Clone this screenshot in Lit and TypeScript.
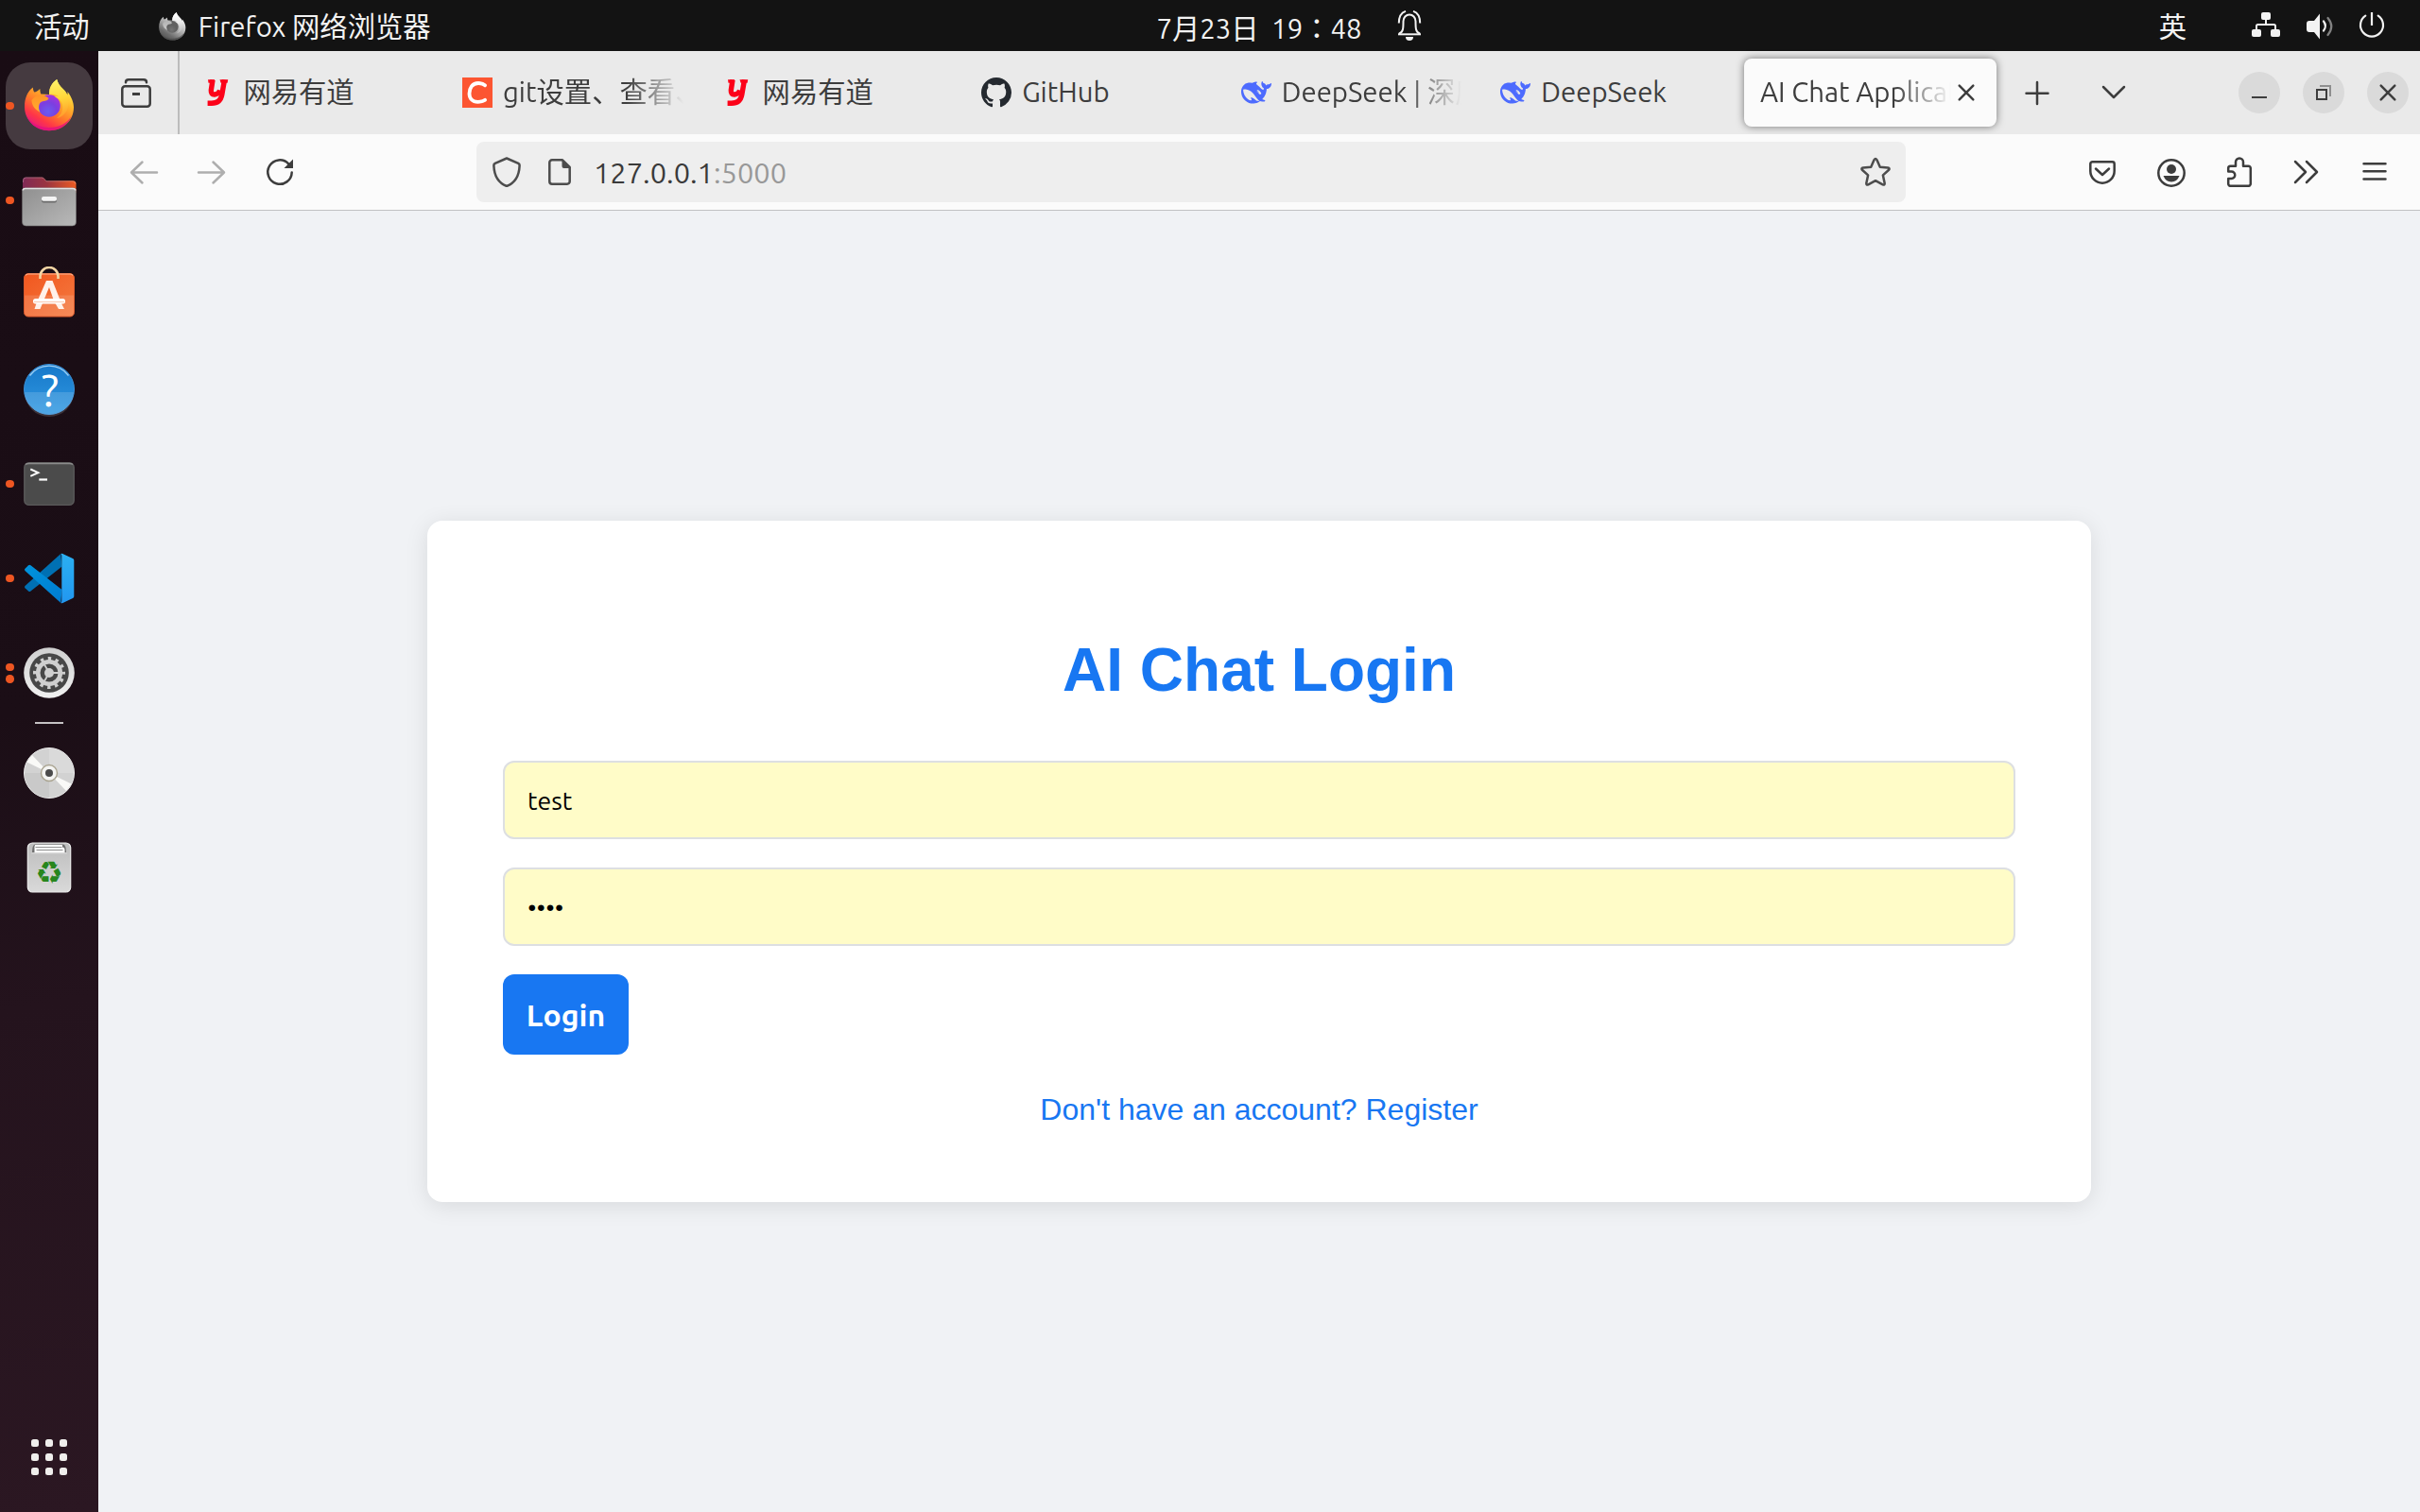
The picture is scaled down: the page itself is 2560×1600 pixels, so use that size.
import { LitElement, html, svg, css, nothing, TemplateResult } from "lit";
import { customElement, property } from "lit/decorators.js";

const DEEPSEEK =
  "M23.748 4.482c-.254-.124-.364.113-.512.234-.051.039-.094.09-.137.136-.372.397-.806.657-1.373.626-.829-.046-1.537.214-2.163.848-.133-.782-.575-1.248-1.247-1.548-.352-.156-.708-.311-.955-.65-.172-.241-.219-.51-.305-.774-.055-.16-.11-.323-.293-.35-.2-.031-.278.136-.356.276-.313.572-.434 1.202-.422 1.84.027 1.436.633 2.58 1.838 3.393.137.093.172.187.129.323-.082.28-.18.552-.266.833-.055.179-.137.217-.329.14a5.526 5.526 0 01-1.736-1.18c-.857-.828-1.631-1.742-2.597-2.458a11.365 11.365 0 00-.689-.471c-.985-.957.13-1.743.388-1.836.27-.098.093-.432-.779-.428-.872.004-1.67.295-2.687.684a3.055 3.055 0 01-.465.137 9.597 9.597 0 00-2.883-.102c-1.885.21-3.39 1.102-4.497 2.623C.082 8.606-.231 10.684.152 12.85c.403 2.284 1.569 4.175 3.36 5.653 1.858 1.533 3.997 2.284 6.438 2.14 1.482-.085 3.133-.284 4.994-1.86.47.234.962.327 1.78.397.63.059 1.236-.03 1.705-.128.735-.156.684-.837.419-.961-2.155-1.004-1.682-.595-2.113-.926 1.096-1.296 2.746-2.642 3.392-7.003.05-.347.007-.565 0-.845-.004-.17.035-.237.23-.256a4.173 4.173 0 001.545-.475c1.396-.763 1.96-2.015 2.093-3.517.02-.23-.004-.467-.247-.588zM11.581 18c-2.089-1.642-3.102-2.183-3.52-2.16-.392.024-.321.471-.235.763.09.288.207.486.371.739.114.167.192.416-.113.603-.673.416-1.842-.14-1.897-.167-1.361-.802-2.5-1.86-3.301-3.307-.774-1.393-1.224-2.887-1.298-4.482-.02-.386.093-.522.477-.592a4.696 4.696 0 011.529-.039c2.132.312 3.946 1.265 5.468 2.774.868.86 1.525 1.887 2.202 2.891.72 1.066 1.494 2.082 2.48 2.914.348.292.625.514.891.677-.802.09-2.14.11-3.054-.614zm1-6.44a.306.306 0 01.415-.287.302.302 0 01.2.288.306.306 0 01-.31.307.303.303 0 01-.304-.308zm3.11 1.596c-.2.081-.399.151-.59.16a1.245 1.245 0 01-.798-.254c-.274-.23-.47-.358-.552-.758a1.73 1.73 0 01.016-.588c.07-.327-.008-.537-.239-.727-.187-.156-.426-.199-.688-.199a.559.559 0 01-.254-.078c-.11-.054-.2-.19-.114-.358.028-.054.16-.186.192-.21.356-.202.767-.136 1.146.016.352.144.618.408 1.001.782.391.451.462.576.685.914.176.265.336.537.445.848.067.195-.019.354-.25.452z";

const GITHUB =
  "M8 0C3.58 0 0 3.58 0 8c0 3.54 2.29 6.53 5.47 7.59.4.07.55-.17.55-.38 0-.19-.01-.82-.01-1.49-2.01.37-2.53-.49-2.69-.94-.09-.23-.48-.94-.82-1.13-.28-.15-.68-.52-.01-.53.63-.01 1.08.58 1.23.82.72 1.21 1.87.87 2.33.66.07-.52.28-.87.51-1.07-1.78-.2-3.64-.89-3.64-3.95 0-.87.31-1.59.82-2.15-.08-.2-.36-1.02.08-2.12 0 0 .67-.21 2.2.82.64-.18 1.32-.27 2-.27.68 0 1.36.09 2 .27 1.53-1.04 2.2-.82 2.2-.82.44 1.1.16 1.92.08 2.12.51.56.82 1.27.82 2.15 0 3.07-1.87 3.75-3.65 3.95.29.25.54.73.54 1.48 0 1.07-.01 1.93-.01 2.2 0 .21.15.46.55.38A8.013 8.013 0 0016 8c0-4.42-3.58-8-8-8z";

type Glyph = { box: string; body: TemplateResult };

/* Line icons: stroked with the current colour. */
const LINE: Record<string, Glyph> = {
  view: {
    box: "0 0 32 32",
    body: svg`<path d="M5 5.200C5 3 6.400 2.300 8 2.300h16c1.600 0 3 .7 3 2.900"/><rect x="1.300" y="9.300" width="29.400" height="21.400" rx="3"/><path d="M12 17.500h8" stroke-width="3" stroke-linecap="butt"/>`,
  },
  back: { box: "0 0 32 32", body: svg`<path d="M30 16.500H3M14.500 5.500L3 16.500l11.500 11"/>` },
  forward: { box: "0 0 32 32", body: svg`<path d="M2 16.500h27M17.500 5.500L29 16.500l-11.500 11"/>` },
  reload: {
    box: "0 0 32 32",
    body: svg`<path d="M28.700 16.500A12.700 12.700 0 1 1 25.200 7.300"/><path d="M30 2.500V12h-9.500z" fill="currentColor" stroke="none"/>`,
  },
  shield: {
    box: "0 0 32 32",
    body: svg`<path d="M16 1.500L28.300 6.800Q29.800 7.600 29.600 9.500C29.200 19 25 27.500 16 31 7 27.500 2.800 19 2.400 9.500 2.200 7.600 3.700 6.800 3.700 6.800z"/>`,
  },
  page: {
    box: "0 0 32 32",
    body: svg`<path d="M19 3.300H8a2.700 2.700 0 0 0-2.700 2.700v20A2.700 2.700 0 0 0 8 28.700h16a2.700 2.700 0 0 0 2.700-2.700V11z"/><path d="M18.500 2.500L28 12h-7.500a2 2 0 0 1-2-2z" fill="currentColor" stroke="none"/>`,
  },
  star: {
    box: "0 0 32 32",
    body: svg`<path d="M14.600 3.100q1.400-2 2.800 0l3.400 7.600 8.300.8q2.300.5 1 2.300l-6.200 5.600 1.800 8.500q0 2.200-2 1.500L16 25.200l-7.700 4.200q-2 .7-2-1.500l1.800-8.500-6.200-5.600q-1.300-1.800 1-2.300l8.300-.8z"/>`,
  },
  pocket: {
    box: "0 0 32 32",
    body: svg`<path d="M5.500 5.200h21a2.200 2.200 0 0 1 2.200 2.200V15a12.700 12.700 0 0 1-25.400 0V7.400a2.200 2.200 0 0 1 2.200-2.200z"/><path d="M9 12.500l7 6.500 7-6.500"/>`,
  },
  account: {
    box: "0 0 32 32",
    body: svg`<circle cx="17" cy="17" r="13.700"/><circle cx="17" cy="13" r="5" fill="currentColor" stroke="none"/><path d="M8.500 20h17q-2.500 6.500-8.500 6.500T8.500 20z" fill="currentColor" stroke="none"/>`,
  },
  extension: {
    box: "0 0 32 32",
    body: svg`<path d="M5.200 15.500V12a2.300 2.300 0 0 1 2.300-2.300H13V5.500a4 4 0 0 1 8 0v4.200h5.500A2.300 2.300 0 0 1 28.800 12v16.500a2.300 2.300 0 0 1-2.300 2.300h-19a2.300 2.300 0 0 1-2.300-2.300V23H8.500a3.750 3.750 0 0 0 0-7.500z"/>`,
  },
  more: { box: "0 0 32 32", body: svg`<path d="M4 5l11 11L4 27M16 5l11 11-11 11"/>` },
  menu: { box: "0 0 32 32", body: svg`<path d="M4.500 7.200h23M4.500 15.300h23M4.500 23.400h23"/>` },
  plus: { box: "0 0 32 32", body: svg`<path d="M16 5v23M4.500 16.800h23"/>` },
  chevron: { box: "0 0 32 32", body: svg`<path d="M5 10l11 11L27 10"/>` },
  close: { box: "0 0 32 32", body: svg`<path d="M8.700 8.700l14.600 14.600M23.300 8.700L8.700 23.300"/>` },
  minimize: { box: "0 0 32 32", body: svg`<path d="M8 21h16" stroke-width="2" stroke-linecap="butt"/>` },
  restore: {
    box: "0 0 32 32",
    body: svg`<rect x="9" y="13" width="10" height="10" stroke-width="2" stroke-linejoin="miter"/><path d="M12 9h11v11" stroke-width="2" stroke="#8e8e8e" stroke-linejoin="miter" stroke-linecap="butt"/>`,
  },
  bell: {
    box: "0 0 32 32",
    body: svg`<path d="M5.500 24.300C9.500 23 9.500 18.500 9.500 11.500a6.500 7 0 0 1 13 0C22.500 18.500 22.500 23 26.500 24.300" stroke-width="2"/><path d="M4 25.300h24" stroke-width="2" stroke-linecap="butt"/><path d="M12 28h8a4 4 0 0 1-8 0z" fill="currentColor" stroke="none"/><path d="M4.800 13.500C4.800 7 7 2.500 12 .9M27.200 13.500C27.200 7 25 2.500 20 .9" stroke-width="2" stroke-linecap="butt"/>`,
  },
  network: {
    box: "0 0 32 32",
    body: svg`<g fill="currentColor" stroke="none"><rect x="11" y="2" width="10" height="8" rx="2"/><rect x="1" y="20" width="10" height="8" rx="2"/><rect x="21" y="20" width="10" height="8" rx="2"/></g><path d="M16 9v6M6 21v-4.500a1.500 1.500 0 0 1 1.500-1.500h17a1.500 1.500 0 0 1 1.500 1.500V21" stroke-width="2"/>`,
  },
  volume: {
    box: "0 0 32 32",
    body: svg`<path d="M5 11h5l6-7.500v27L10 23H5q-3 0-3-3v-6q0-3 3-3z" fill="currentColor" stroke="none"/><path d="M20 11.500q3.800 5 0 10" stroke-width="2.200"/><path d="M24.500 8q7.500 9 0 18" stroke-width="2.200" opacity=".5"/>`,
  },
  power: {
    box: "0 0 32 32",
    body: svg`<path d="M9.300 5.600a12 12 0 1 0 13.400 0" stroke-width="2.200"/><path d="M16 2v14" stroke-width="2.200" stroke-linecap="butt"/>`,
  },
};

/* Tab favicons. */
const FAVICON: Record<string, Glyph> = {
  youdao: {
    box: "0 0 32 32",
    body: svg`<g fill="none" stroke="#fc0219" stroke-width="5.400"><path d="M11 2.500L9.300 13.500Q9 18.200 13 18q4.300-.3 5.700-4.500"/><path d="M23.500 2.500L20.800 18Q19 27.500 9.500 27.300H5.600"/></g><path d="M6 2.300h7v3.400H6.500zM18.500 2.300h8.700l-.6 3.400h-7z" fill="#fc0219"/>`,
  },
  csdn: {
    box: "0 0 32 32",
    body: svg`<rect width="32" height="32" fill="#fc5531"/><path d="M24 8.300Q21 6 17 6C10.500 6 7.500 11.500 7.500 17c0 5.500 3.500 8.800 8.800 8.800q4.400 0 7.700-2" fill="none" stroke="#fff" stroke-width="3.800" stroke-linecap="round"/>`,
  },
  github: { box: "0 0 16 16", body: svg`<path d=${GITHUB} fill="#24292f"/>` },
  deepseek: { box: "0 0 24 24", body: svg`<path d=${DEEPSEEK} fill="#4d6bfe"/>` },
};

/* Application icons of the dock, drawn on a 60px grid. */
const APPS: Record<string, TemplateResult> = {
  firefox: svg`
    <defs>
      <linearGradient id="fxBody" x1=".8" y1=".1" x2=".25" y2="1">
        <stop offset="0" stop-color="#fff44f"/><stop offset=".3" stop-color="#ffb52b"/><stop offset=".55" stop-color="#ff7a2a"/><stop offset=".78" stop-color="#ff3647"/><stop offset="1" stop-color="#e31587"/>
      </linearGradient>
      <linearGradient id="fxTail" x1=".3" y1="0" x2=".4" y2="1">
        <stop offset="0" stop-color="#fff36b"/><stop offset=".5" stop-color="#ffd83a"/><stop offset="1" stop-color="#ff9a2c"/>
      </linearGradient>
      <radialGradient id="fxOrb" cx=".45" cy=".75" r=".8">
        <stop offset="0" stop-color="#6a5cf0"/><stop offset=".5" stop-color="#7b3fe0"/><stop offset="1" stop-color="#b032d8"/>
      </radialGradient>
      <linearGradient id="fxHead" x1="0" y1="0" x2="0" y2="1">
        <stop offset="0" stop-color="#ff9328"/><stop offset="1" stop-color="#ffb02e"/>
      </linearGradient>
    </defs>
    <path d="M4 31C4 22 7 15 12.800 10.600c.2 2 .5 3.600 1.500 5 2-.5 3.700-1.200 6-3.600.2 2.300.2 4 1 5.500l8.700.5c-.2-7 3-12.500 8.200-16C39 6 41.500 9 45 12.500c3 2.700 3.500 4.500 4 6.500.6-1.300.7-2.200.5-4 4.500 6 6.500 12 6.500 16.500C56 46 44.300 56.200 30 56.200S4 45.500 4 31z" fill="url(#fxBody)"/>
    <path d="M6.500 41c5 8 13 12 23.500 12s18.500-4 23.500-12C49.500 51 41 56.200 30 56.200S10.500 51 6.500 41z" fill="#e3107f" opacity=".8"/>
    <circle cx="30" cy="30" r="11.800" fill="url(#fxOrb)"/>
    <path d="M30 18c-.2-7 3-12.500 8.200-16C39 6 41.500 9 45 12.500c4.500 4.500 6.500 9 5.500 16C49.500 37 44 42 38 43c5-4 7-8 6-14-.7-4-3.500-6.500-8-8.500 1.500-.6 3-.5 4.500 0C38 18 34 17.300 30 18z" fill="url(#fxTail)"/>
    <path d="M11.500 24c3-4 6-6 10-5.500 3 .2 5 1 8 3.500-.3 2-3 2.800-6.500 3.300-2.500.6-4 3-4 6 0 2 .5 4 1.500 5.500-5-2.500-9-7-9-12.800z" fill="url(#fxHead)"/>`,
  files: svg`
    <defs>
      <linearGradient id="flBack"><stop offset="0" stop-color="#7f2a55"/><stop offset=".45" stop-color="#9b3540"/><stop offset="1" stop-color="#ec5b22"/></linearGradient>
      <linearGradient id="flFront" x1="0" y1="0" x2="1" y2="1"><stop offset="0" stop-color="#8f8f8f"/><stop offset="1" stop-color="#b9b9b9"/></linearGradient>
    </defs>
    <path d="M2 22V9q0-3.500 3.500-3.500h17q1.500 0 2.500 1.500l2 2.300h28q3.500 0 3.500 3.500V22z" fill="url(#flBack)"/>
    <path d="M2.500 11V9q0-3 3-3h17q1.500 0 2.500 1.500l2 2.300h28q3 0 3 3" fill="none" stroke="#fff" stroke-opacity=".25"/>
    <path d="M1.500 20q0-3 3-3h51q3 0 3 3v33q0 4-4 4H5.500q-4 0-4-4z" fill="url(#flFront)" stroke="#6f6f6f" stroke-width=".6"/>
    <path d="M2.300 19.500q0-2 2.500-2h50.400q2.500 0 2.500 2" fill="none" stroke="#e2e2e2" stroke-width="1.600"/>
    <rect x="22" y="28" width="16" height="4.500" rx="2" fill="#6c6c6c"/><rect x="22" y="26" width="16" height="4.800" rx="2" fill="#f4f4f4"/>`,
  software: svg`
    <defs><linearGradient id="swBag" x1="0" y1="0" x2="1" y2="1"><stop offset="0" stop-color="#f1571f"/><stop offset="1" stop-color="#f47a40"/></linearGradient></defs>
    <rect x="3.500" y="7.500" width="53" height="45.500" rx="4.500" fill="url(#swBag)" stroke="#d9592c" stroke-width="1"/>
    <path d="M4 30.500h52V49q0 3.500-3.500 3.500h-45Q4 52.500 4 49z" fill="#fff" opacity=".13"/>
    <path d="M5 9.300q1-1.300 3-1.300h44q2 0 3 1.300" fill="none" stroke="#ffb48e" stroke-width="1.200"/>
    <path d="M20.500 13v-2.500a9.500 9.500 0 0 1 19 0V13" fill="none" stroke="#f3d5a4" stroke-width="2.600"/>
    <path d="M27 15h6.500l9.500 24h-7l-6-17-7 17h-6.500z" fill="#fff1ea"/>
    <path d="M16.500 39h6.500l-2.500 6h-6zM36.500 39h6.500l3 6h-6z" fill="#fff1ea"/>
    <rect x="13" y="34" width="34" height="5.500" rx="2.500" fill="#fff"/><path d="M14 37.500h32" stroke="#f9c9b2" stroke-width="1"/>`,
  help: svg`
    <defs><linearGradient id="hpDisc" x1="0" y1="0" x2="0" y2="1"><stop offset="0" stop-color="#1778c9"/><stop offset="1" stop-color="#2f98e2"/></linearGradient></defs>
    <circle cx="30" cy="30" r="26.500" fill="url(#hpDisc)" stroke="#3a8fd6" stroke-width="1"/>
    <path d="M4 33h52A26 26 0 0 1 4 33z" fill="#fff" opacity=".15"/>
    <path d="M9.500 15.500a25.500 25.500 0 0 1 41 0" fill="none" stroke="#9dd0f5" stroke-width="1.300"/>
    <text x="31" y="47.500" text-anchor="middle" font-family="Ubuntu, Noto Sans" font-size="47" fill="#fff">?</text>`,
  terminal: svg`
    <rect x="3.800" y="7.800" width="52.400" height="44.600" rx="5" fill="#4b4b4b" stroke="#5a5a5a" stroke-width="1.400"/>
    <path d="M5 9.500q1-1 3.500-1h43q2.500 0 3.500 1" fill="none" stroke="#8c8c8c" stroke-width="1.300"/>
    <path d="M10.300 14.500l8 3.700-8 3.600" fill="none" stroke="#fff" stroke-width="2"/><path d="M19.300 25.500h8.700" stroke="#fff" stroke-width="2.200"/>`,
  vscode: svg`
    <defs>
      <linearGradient id="vsR" x1="0" y1="0" x2="0" y2="1"><stop offset="0" stop-color="#2bb0f2"/><stop offset="1" stop-color="#2297f0"/></linearGradient>
      <linearGradient id="vsB" x1="0" y1="0" x2="1" y2="1"><stop offset="0" stop-color="#0094dc"/><stop offset="1" stop-color="#007bd0"/></linearGradient>
    </defs>
    <path d="M42.300 4L4.500 38q-1.200 1.200 0 2.300L8 43.500q1.200 1 2.500 0L43.500 17.500z" fill="#0070b3"/>
    <path d="M42.300 56L4.500 22q-1.200-1.200 0-2.300L8 16.300q1.200-1 2.500 0L43.500 42z" fill="url(#vsB)"/>
    <path d="M42.300 4q1-.6 2-.1l10.700 5.200q1.300.7 1.300 2v38q0 1.300-1.300 2L44.500 56q-1.300.5-2.200 0 1-.8 1-2V6q0-1.200-1-2z" fill="url(#vsR)"/>`,
  settings: svg`
    <defs><linearGradient id="stRing" x1="0" y1="0" x2="0" y2="1"><stop offset="0" stop-color="#cfcfcf"/><stop offset="1" stop-color="#f1f1f1"/></linearGradient></defs>
    <circle cx="30" cy="30" r="26.800" fill="url(#stRing)"/><circle cx="30" cy="30" r="20.800" fill="#474747"/>
    <circle cx="30" cy="30" r="15" fill="none" stroke="#cfcfcf" stroke-width="4" stroke-dasharray="3.400 4.454" stroke-dashoffset="1.700"/>
    <circle cx="30" cy="30" r="11.800" fill="none" stroke="#cfcfcf" stroke-width="4.600"/>
    <path d="M30 30h10M30 30l-5-8.700M30 30l-5 8.700" stroke="#cfcfcf" stroke-width="1.800"/><circle cx="30" cy="30" r="5" fill="#cfcfcf"/>`,
  disc: svg`
    <circle cx="30" cy="30" r="26.500" fill="#d2d2d2" stroke="#ededed" stroke-width="1"/>
    <path d="M30 30V4a26 26 0 0 1 26 26z" fill="#dadada"/><path d="M30 30v26A26 26 0 0 1 4 30z" fill="#c9c9c9"/>
    <path d="M30 30L6.500 18.500 12 11zM30 30l23.500 11.500L48 49z" fill="#f9f9f7"/>
    <circle cx="30" cy="30" r="8.500" fill="#f4f4f2" stroke="#aaa491" stroke-width="1.400"/><circle cx="30" cy="30" r="4" fill="#4b4b4b"/>`,
  trash: svg`
    <defs><linearGradient id="trBin" x1="0" y1="0" x2="0" y2="1"><stop offset="0" stop-color="#bdbdbd"/><stop offset="1" stop-color="#d9d9d9"/></linearGradient></defs>
    <rect x="7.300" y="4" width="45.400" height="52" rx="5" fill="url(#trBin)" stroke="#ececec" stroke-width="1.200"/>
    <path d="M12 14q0-8 3-8.500h30q3 .5 3 8.500z" fill="#6f6f6f"/><path d="M15 6h29v2.500q2.500 0 2.500 3V15h-32V11q-.5-3 .5-5z" fill="#fff"/><path d="M15.500 8.600h28M16.500 11.500h28" stroke="#8a8a8a" stroke-width="1"/><path d="M11 15h38" stroke="#cfcfcf" stroke-width="1.500"/>
    <text x="30" y="46.500" text-anchor="middle" font-family="DejaVu Sans" font-size="33" fill="#27861d">♻</text>`,
};

const icon = (name: string, cls = "") =>
  html`<svg class="icon ${cls}" viewBox=${LINE[name].box}>${LINE[name].body}</svg>`;

const iconStyles = css`
  .icon {
    width: 32px;
    height: 32px;
    flex: none;
    display: block;
    fill: none;
    stroke: currentColor;
    stroke-width: 2.500;
    stroke-linecap: round;
    stroke-linejoin: round;
  }
`;

@customElement("top-bar")
export class TopBar extends LitElement {
  static styles = [
    iconStyles,
    css`
      :host {
        display: grid;
        grid-template-columns: 1fr auto 1fr;
        align-items: center;
        height: 54px;
        background: #131313;
        color: #f2f2f2;
        font-size: 29.330px;
        line-height: 54px;
        white-space: pre;
      }
      .left,
      .clock,
      .status {
        display: flex;
        align-items: center;
        height: 54px;
      }
      .left {
        padding-left: 36px;
      }
      .app {
        display: flex;
        align-items: center;
        margin-left: 72px;
      }
      .text {
        padding-top: 4px;
      }
      .fx {
        width: 31px;
        height: 31px;
        filter: grayscale(1) brightness(1.1);
        margin-right: 12px;
      }
      .clock {
        padding-left: 170px;
        gap: 34px;
      }
      .colon {
        font-family: "Noto Sans CJK TC", sans-serif;
      }
      .status {
        justify-content: flex-end;
        padding-right: 35px;
      }
      .lang {
        margin-right: 68px;
      }
      .volume {
        margin: 0 23px 0 25px;
      }
    `,
  ];

  render() {
    return html`
      <div class="left">
        <span class="text">活动</span>
        <div class="app">
          <svg class="fx" viewBox="2 0 57 57">${APPS.firefox}</svg>
          <span class="text">Firefox 网络浏览器</span>
        </div>
      </div>
      <div class="clock">
        <span class="text">7月23日  19<span class="colon">：</span>48</span>
        ${icon("bell")}
      </div>
      <div class="status">
        <span class="text lang">英</span>
        ${icon("network")} ${icon("volume", "volume")} ${icon("power")}
      </div>
    `;
  }
}

@customElement("dock-item")
export class DockItem extends LitElement {
  @property() app = "";
  @property({ type: Number }) windows = 0;
  @property({ type: Boolean }) active = false;

  static styles = css`
    :host {
      display: flex;
      position: relative;
      height: 100px;
      align-items: center;
      justify-content: center;
    }
    .tile {
      width: 92px;
      height: 92px;
      border-radius: 26px;
      display: flex;
      align-items: center;
      justify-content: center;
    }
    .tile.active {
      background: #453a40;
    }
    .app {
      width: 60px;
      height: 60px;
      display: block;
    }
    .dots {
      position: absolute;
      left: 6px;
      top: 0;
      bottom: 0;
      display: flex;
      flex-direction: column;
      justify-content: center;
      gap: 4px;
    }
    .dot {
      width: 8.500px;
      height: 8.500px;
      border-radius: 50%;
      background: #ee5622;
    }
  `;

  render() {
    return html`
      <div class="tile ${this.active ? "active" : ""}">
        <svg class="app" viewBox="0 0 60 60">${APPS[this.app]}</svg>
      </div>
      ${this.windows
        ? html`<div class="dots">${Array.from({ length: this.windows }, () => html`<span class="dot"></span>`)}</div>`
        : nothing}
    `;
  }
}

@customElement("app-dock")
export class AppDock extends LitElement {
  static styles = css`
    :host {
      display: flex;
      flex-direction: column;
      width: 104px;
      flex: none;
      box-sizing: border-box;
      padding: 8px 0;
      background: linear-gradient(170deg, #190c14 0%, #1b0e16 45%, #24131d 65%, #2b1722 100%);
    }
    .rule {
      width: 30px;
      height: 2px;
      margin: 2px auto;
      background: #c5c2c4;
    }
    .grid {
      margin: auto auto 31px;
      display: grid;
      grid-template-columns: repeat(3, 8px);
      gap: 7px;
    }
    .cell {
      height: 8px;
      border-radius: 2.500px;
      background: #efeeec;
    }
  `;

  render() {
    return html`
      <dock-item app="firefox" windows="1" active></dock-item>
      <dock-item app="files" windows="1"></dock-item>
      <dock-item app="software"></dock-item>
      <dock-item app="help"></dock-item>
      <dock-item app="terminal" windows="1"></dock-item>
      <dock-item app="vscode" windows="1"></dock-item>
      <dock-item app="settings" windows="2"></dock-item>
      <div class="rule"></div>
      <dock-item app="disc"></dock-item>
      <dock-item app="trash"></dock-item>
      <div class="grid">${Array.from({ length: 9 }, () => html`<span class="cell"></span>`)}</div>
    `;
  }
}

type Tab = { favicon?: string; title: string; active?: boolean; fade?: boolean };

const TABS: Tab[] = [
  { favicon: "youdao", title: "网易有道" },
  { favicon: "csdn", title: "git设置、查看、", fade: true },
  { favicon: "youdao", title: "网易有道" },
  { favicon: "github", title: "GitHub" },
  { favicon: "deepseek", title: "DeepSeek | 深度", fade: true },
  { favicon: "deepseek", title: "DeepSeek" },
  { title: "AI Chat Application", active: true, fade: true },
];

@customElement("tab-strip")
export class TabStrip extends LitElement {
  static styles = [
    iconStyles,
    css`
      :host {
        display: flex;
        height: 88px;
        background: #eaeaea;
        color: #3d3d3d;
        font-size: 29.330px;
      }
      .view {
        width: 80px;
        padding-right: 4px;
        border-right: 2px solid #bcbcbc;
        display: flex;
        align-items: center;
        justify-content: center;
      }
      .tabs {
        display: flex;
        align-items: center;
        gap: 8px;
        padding-left: 7.400px;
      }
      .tab {
        display: flex;
        align-items: center;
        box-sizing: border-box;
        width: 266.600px;
        height: 72px;
        padding: 0 16px 0 17px;
        border-radius: 8px;
      }
      .tab.active {
        background: #fbfbfb;
        box-shadow: 0 0 8px rgba(0, 0, 0, 0.5);
      }
      .favicon {
        width: 32px;
        height: 32px;
        flex: none;
        margin-right: 11px;
      }
      .title {
        flex: 1;
        min-width: 0;
        overflow: hidden;
        white-space: nowrap;
        line-height: 44px;
      }
      .title.fade {
        -webkit-mask-image: linear-gradient(to left, transparent, #000 60px);
        mask-image: linear-gradient(to left, transparent, #000 60px);
      }
      .actions {
        display: flex;
        align-items: center;
        gap: 49px;
        padding-left: 27px;
      }
      .controls {
        display: flex;
        align-items: center;
        gap: 24px;
        margin-left: auto;
        padding-right: 12px;
      }
      .control {
        width: 44px;
        height: 44px;
        border-radius: 50%;
        background: #dadada;
        display: flex;
        align-items: center;
        justify-content: center;
      }
    `,
  ];

  private tab(t: Tab) {
    return html`
      <div class="tab ${t.active ? "active" : ""}">
        ${t.favicon
          ? html`<svg class="favicon" viewBox=${FAVICON[t.favicon].box}>${FAVICON[t.favicon].body}</svg>`
          : nothing}
        <span class="title ${t.fade ? "fade" : ""}">${t.title}</span>
        ${t.active ? icon("close") : nothing}
      </div>
    `;
  }

  render() {
    return html`
      <div class="view">${icon("view")}</div>
      <div class="tabs">${TABS.map((t) => this.tab(t))}</div>
      <div class="actions">${icon("plus")} ${icon("chevron")}</div>
      <div class="controls">
        ${["minimize", "restore", "close"].map((c) => html`<span class="control">${icon(c)}</span>`)}
      </div>
    `;
  }
}

@customElement("nav-bar")
export class NavBar extends LitElement {
  static styles = [
    iconStyles,
    css`
      :host {
        display: flex;
        align-items: center;
        box-sizing: border-box;
        height: 81px;
        padding: 0 32px;
        background: #fbfbfb;
        border-bottom: 1px solid #c1c1c3;
        color: #3d3d3d;
      }
      .history,
      .tools {
        display: flex;
        gap: 40px;
      }
      .off {
        color: #aeaeae;
      }
      .url {
        display: flex;
        align-items: center;
        box-sizing: border-box;
        width: 1512px;
        height: 64px;
        margin-left: 192px;
        padding: 0 16px;
        border-radius: 8px;
        background: #eeeeee;
        color: #4d4d4d;
      }
      .page {
        margin: 0 20px 0 24px;
      }
      .address {
        flex: 1;
        font-size: 30.800px;
        color: #3a3a3a;
      }
      .port {
        color: #989898;
      }
      .tools {
        margin-left: auto;
      }
    `,
  ];

  render() {
    return html`
      <div class="history">${icon("back", "off")} ${icon("forward", "off")} ${icon("reload")}</div>
      <div class="url">
        ${icon("shield")} ${icon("page", "page")}
        <span class="address">127.0.0.1<span class="port">:5000</span></span>
        ${icon("star")}
      </div>
      <div class="tools">
        ${["pocket", "account", "extension", "more", "menu"].map((n) => icon(n))}
      </div>
    `;
  }
}

@customElement("login-card")
export class LoginCard extends LitElement {
  static styles = css`
    :host {
      display: block;
      box-sizing: border-box;
      width: 1760px;
      height: 721px;
      padding: 80px;
      border-radius: 16px;
      background: #fff;
      box-shadow: 0 4px 24px rgba(0, 0, 0, 0.1);
      font-family: "Liberation Sans", Arial, sans-serif;
    }
    .title {
      margin: 38px 0 56px;
      font-size: 64px;
      line-height: 80px;
      font-weight: 700;
      text-align: center;
      color: #1877f2;
    }
    .form {
      display: flex;
      flex-direction: column;
      align-items: flex-start;
      gap: 30px;
    }
    .field {
      box-sizing: border-box;
      display: block;
      width: 100%;
      height: 83px;
      padding: 0 24px;
      margin: 0;
      border: 2px solid #dddfe2;
      border-radius: 12px;
      outline: none;
      background: #fffcc8;
      color: #000;
      font-family: Ubuntu, "Noto Sans", sans-serif;
      font-size: 26.670px;
    }
    .submit {
      width: 133px;
      height: 85px;
      padding: 0;
      border: 0;
      border-radius: 12px;
      background: #1877f2;
      color: #fff;
      font-family: Ubuntu, "Noto Sans", sans-serif;
      font-size: 32px;
      font-weight: 700;
    }
    .register {
      display: block;
      margin-top: 38px;
      text-align: center;
      font-size: 32px;
      line-height: 40px;
      color: #1877f2;
      text-decoration: none;
    }
  `;

  render() {
    return html`
      <h2 class="title">AI Chat Login</h2>
      <div class="form">
        <input class="field" type="text" .value=${"test"} />
        <input class="field" type="password" .value=${"test"} />
        <button class="submit">Login</button>
      </div>
      <a class="register">Don't have an account? Register</a>
    `;
  }
}

@customElement("app-root")
export class AppRoot extends LitElement {
  static styles = css`
    :host {
      display: flex;
      flex-direction: column;
      width: 2560px;
      height: 1600px;
      overflow: hidden;
      font-family: Ubuntu, "Noto Sans", "Noto Sans CJK SC", sans-serif;
    }
    .desktop {
      display: flex;
      flex: 1;
      min-height: 0;
    }
    .window {
      display: flex;
      flex-direction: column;
      flex: 1;
      min-width: 0;
    }
    .page {
      flex: 1;
      display: flex;
      align-items: center;
      justify-content: center;
      background: #f0f2f5;
    }
  `;

  render() {
    return html`
      <top-bar></top-bar>
      <div class="desktop">
        <app-dock></app-dock>
        <div class="window">
          <tab-strip></tab-strip>
          <nav-bar></nav-bar>
          <div class="page"><login-card></login-card></div>
        </div>
      </div>
    `;
  }
}
